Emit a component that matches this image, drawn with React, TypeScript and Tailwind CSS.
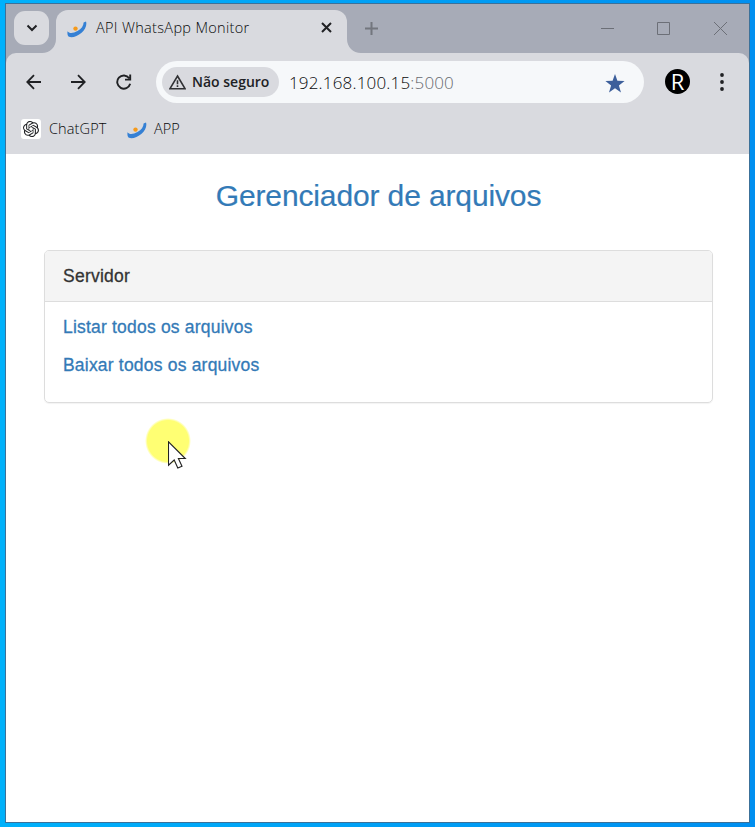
import React from "react";
import { SiOpenai } from "react-icons/si";

function Swoosh() {
  return (
    <svg width="20" height="18" viewBox="0 0 20 18" className="shrink-0">
      <path d="M0.6 10.2 C2 12.6 6 12.6 10.5 10 C14.5 7.7 16.6 4.6 16.6 1.4 L19 0.5 C20.2 4 18.2 8.6 14.6 11.8 C10.6 15.3 5 17.2 2 15.8 C0.4 15 0.2 12 0.6 10.2Z" fill="#3580d4" />
      <circle cx="8.5" cy="7.6" r="2.2" fill="#f59a1c" />
    </svg>
  );
}

function TabStrip() {
  return (
    <div className="flex h-[49px] bg-[#a7abb7] pl-[8px]">
      <div className="mt-[7px] flex h-[34px] w-[35px] items-center justify-center rounded-[11px] bg-[#d9dadf]">
        <svg width="12" height="8" viewBox="0 0 12 8" fill="none" stroke="#202124" strokeWidth="2">
          <path d="M1.5 1.5 6 6 10.5 1.5" />
        </svg>
      </div>
      <div className="relative ml-[7px] mt-[6px] flex h-[43px] w-[291px] rounded-t-[12px] bg-[#d9dadf] pl-[11px] pt-[10px]">
        <svg className="absolute bottom-0 -left-[14px]" width="14" height="14" viewBox="0 0 14 14">
          <path d="M14 0V14H0C8 14 14 8 14 0Z" fill="#d9dadf" />
        </svg>
        <svg className="absolute bottom-0 -right-[14px]" width="14" height="14" viewBox="0 0 14 14">
          <path d="M0 0V14H14C6 14 0 8 0 0Z" fill="#d9dadf" />
        </svg>
        <div className="mt-[1px]"><Swoosh /></div>
        <span className="ml-[9px] -mt-[2px] w-[154px] whitespace-nowrap font-['Open_Sans',sans-serif] text-[14.5px] font-light leading-[20px] tracking-[0.33px] text-[#08090a]">
          API WhatsApp Monitor
        </span>
        <svg className="ml-[71px] mt-[2px]" width="11" height="11" viewBox="0 0 11 11" stroke="#202124" strokeWidth="2">
          <path d="M1 1 10 10M10 1 1 10" />
        </svg>
      </div>
      <svg className="ml-[18px] mt-[18px]" width="13" height="13" viewBox="0 0 13 13" stroke="#73767e" strokeWidth="2">
        <path d="M6.5 0V13M0 6.5H13" />
      </svg>
      <svg className="ml-[223px] mt-[18px]" width="13" height="13" viewBox="0 0 13 13" stroke="#6c6f77">
        <path d="M0 6.5H13" />
      </svg>
      <svg className="ml-[43px] mt-[18px]" width="13" height="13" viewBox="0 0 13 13" fill="none" stroke="#6c6f77">
        <path d="M.5 .5H12.5V12.5H.5Z" />
      </svg>
      <svg className="ml-[44px] mt-[18px]" width="13" height="13" viewBox="0 0 13 13" stroke="#6c6f77">
        <path d="M0 0 13 13M13 0 0 13" />
      </svg>
    </div>
  );
}

function Toolbar() {
  return (
    <div className="bg-[#a7abb7]">
      <div className="flex h-[59px] items-start rounded-t-[10px] bg-[#d9dadf] pt-[8px]">
        <svg className="ml-[20px] mt-[13px]" width="16" height="16" viewBox="0 0 16 16" fill="none" stroke="#202124" strokeWidth="1.8">
          <path d="M15 8H2M8 1.2 1.3 8 8 14.8" />
        </svg>
        <svg className="ml-[28px] mt-[13px]" width="16" height="16" viewBox="0 0 16 16" fill="none" stroke="#202124" strokeWidth="1.8">
          <path d="M1 8H14M8 1.2 14.7 8 8 14.8" />
        </svg>
        <svg className="ml-[30px] mt-[13px]" width="16" height="16" viewBox="0 0 16 16" fill="none" stroke="#202124" strokeWidth="1.9">
          <path d="M13.2 4.2A6.6 6.6 0 1 0 14.2 9.8M14.2 0.4V5.6H9" />
        </svg>
        <div className="ml-[24px] flex h-[42px] w-[488px] items-center rounded-full bg-[#f6f8fa] pl-[6px]">
          <div className="flex h-[30px] w-[117px] items-center rounded-full bg-[#d9dadf] pl-[7px]">
            <svg width="17" height="16" viewBox="0 0 17 16" fill="none" stroke="#303134" strokeWidth="1.6">
              <path d="M8.5 2 16 14.7H1ZM8.5 6.2V10.2M8.5 11.3V13" />
            </svg>
            <span className="ml-[6px] whitespace-nowrap font-['Open_Sans',sans-serif] text-[14px] font-semibold leading-[20px] text-[#202124]">
              Não seguro
            </span>
          </div>
          <span className="ml-[10px] mt-[1px] w-[166px] whitespace-nowrap font-['Open_Sans',sans-serif] text-[17px] font-light leading-[24px] tracking-[0.17px] text-[#08090a]">
            192.168.100.15<span className="text-[#66696e]">:5000</span>
          </span>
          <svg className="ml-[150px] mt-[3px]" width="20" height="19" viewBox="0 0 20 19">
            <path d="M10 0 12.4 6.8 19.6 7 13.9 11.4 16 18.4 10 14.3 4 18.4 6.1 11.4 .4 7 7.6 6.8Z" fill="#3d5f9b" />
          </svg>
        </div>
        <div className="ml-[21px] mt-[8px] flex size-[25px] items-center justify-center rounded-full bg-black pb-[1px] font-['Open_Sans',sans-serif] text-[22px] font-medium leading-none text-white">
          R
        </div>
        <svg className="ml-[30px] mt-[11px]" width="4" height="20" viewBox="0 0 4 20" fill="#202124">
          <circle cx="2" cy="3" r="1.9" />
          <circle cx="2" cy="10" r="1.9" />
          <circle cx="2" cy="17" r="1.9" />
        </svg>
      </div>
    </div>
  );
}

function Bookmarks() {
  return (
    <div className="flex h-[42px] bg-[#d9dadf] pl-[15px] pt-[7px] font-['Open_Sans',sans-serif] text-[14.5px] font-light leading-[20px] text-[#08090a]">
      <div className="flex size-[20px] items-center justify-center rounded-[3px] bg-white">
        <SiOpenai size={16} color="#202124" />
      </div>
      <span className="ml-[8px] w-[58px] whitespace-nowrap tracking-[0.12px]">ChatGPT</span>
      <div className="ml-[20px] mt-[3px]"><Swoosh /></div>
      <span className="ml-[7px]">APP</span>
    </div>
  );
}

export default function App() {
  return (
    <div className="relative h-[827px] w-[755px] bg-linear-to-r from-[#00b1fb] to-[#008ff0] pl-[5px] pt-[3px]">
      <div className="h-[820px] w-[745px] border border-[#3c7199] bg-white">
        <TabStrip />
        <Toolbar />
        <Bookmarks />
        <main className="px-[38px] pr-[36px] pt-[22px] font-['Liberation_Sans',Arial,sans-serif]">
          <h1 className="text-center text-[30px] leading-[40px] tracking-[-0.13px] text-[#337ab7] [-webkit-text-stroke:0.2px_#337ab7]">Gerenciador de arquivos</h1>
          <section className="mt-[34px] h-[153px] rounded-[5px] border border-[#dddddd] shadow-[0_1px_1px_rgba(0,0,0,0.05)]">
            <h2 className="h-[51px] rounded-t-[4px] border-b border-[#dddddd] bg-[#f4f4f4] pl-[18px] text-[17.5px] leading-[50px] tracking-[0.25px] text-[#333333] [-webkit-text-stroke:0.3px_#333333]">Servidor</h2>
            <div className="flex flex-col gap-[13px] pl-[18px] pt-[13px] text-[17.5px] leading-[25px] tracking-[0.2px] text-[#337ab7] [-webkit-text-stroke:0.3px_#337ab7]">
              <a>Listar todos os arquivos</a>
              <a>Baixar todos os arquivos</a>
            </div>
          </section>
        </main>
      </div>
      <div className="absolute left-[145px] top-[418px] size-[46px] rounded-full bg-[radial-gradient(circle,#ffff73_0,#ffff73_20.5px,transparent_23px)]" />
      <svg className="absolute left-[168px] top-[441px]" width="19" height="29" viewBox="0 0 19 29">
        <path d="M.5 .8V24.2L6.2 19 9.8 27 14 25.2 10.4 17.5H17.3Z" fill="#fff" stroke="#222" strokeWidth="1.1" />
      </svg>
    </div>
  );
}
